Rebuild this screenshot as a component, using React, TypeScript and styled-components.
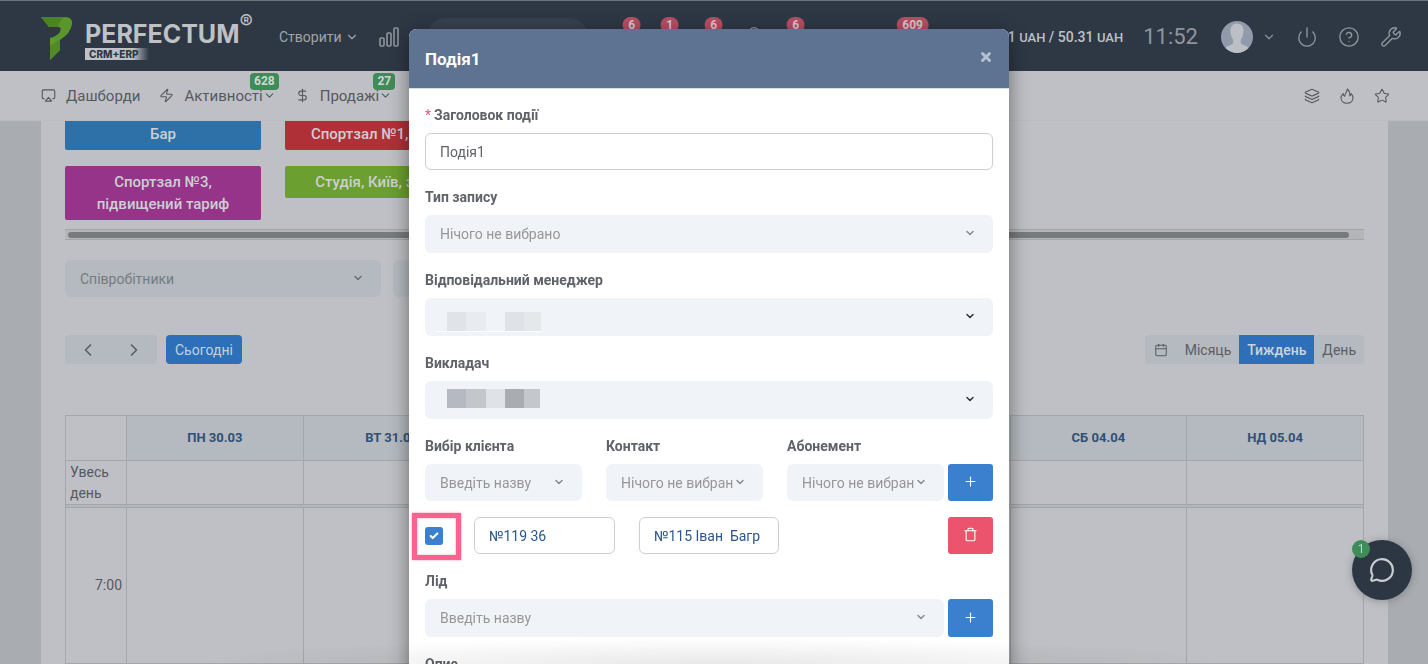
import React from 'react';
import styled, { createGlobalStyle } from 'styled-components';
import {
  Airplay, Zap, DollarSign, ChevronDown, ChevronLeft, ChevronRight, Power, Wrench, Layers,
  Star, Calendar, MessageCircle, Plus, X, Check, CircleQuestionMark, Bell, Trash,
} from 'lucide-react';

const Global = createGlobalStyle`
  *, *::before, *::after { box-sizing: border-box; }
  body {
    margin: 0;
    overflow: hidden;
    background: #a9adb2;
    color: #55595f;
    font: 14px/20px Roboto, "Liberation Sans", sans-serif;
  }
  button, input, select { font: inherit; color: inherit; margin: 0; }
  button { border: 0; padding: 0; background: none; cursor: pointer; }
  a { color: inherit; text-decoration: none; }
`;

const TopBars = styled.div`
  position: fixed;
  inset: 0 0 auto;
  z-index: 2;
`;

const Header = styled.header`
  display: flex;
  align-items: center;
  height: 71px;
  padding: 2px 26px 0 41px;
  border-top: 1px solid #6d737b;
  background: #2e3845;
  color: #8f959c;
`;

const Logo = styled.a`
  display: flex;
  align-items: center;
  width: 216px;
  padding-top: 3px;
  color: #bfc1c5;
`;
const LogoText = styled.span`
  display: flex;
  flex-direction: column;
  align-items: flex-start;
  margin-left: 12px;
  padding-top: 4px;
`;
const LogoName = styled.span`
  display: flex;
  font: 700 25px/27px Inter, sans-serif;
`;
const Registered = styled.sup`
  margin-top: -11px;
  font-weight: 400;
  font-size: 20px;
  line-height: 24px;
`;
const LogoTag = styled.span`
  width: 64px;
  padding-left: 4px;
  background: linear-gradient(90deg, #bfc1c5 75%, #2e3845);
  color: #2e3845;
  font: 800 10px/12px Inter, sans-serif;
`;

const CreateButton = styled.button`
  display: flex;
  align-items: center;
  gap: 3px;
  margin: 0 19px 0 22px;
  color: #a0a5ab;
`;

const SearchPill = styled.input`
  width: 161px;
  height: 38px;
  margin-left: 27px;
  border: 0;
  border-radius: 19px;
  background: #37414d;
`;

const Alerts = styled.div`
  display: flex;
  gap: 18px;
  margin-left: 32px;
`;
const Alert = styled.button<{ $gap?: number }>`
  position: relative;
  width: 24px;
  height: 22px;
  margin-left: ${(p) => p.$gap ?? 0}px;
`;
const AlertBadge = styled.span`
  position: absolute;
  left: 12px;
  top: -9px;
  transform: translateX(-50%);
  padding: 0 6px;
  border-radius: 8px;
  background: #b84e63;
  color: #d3c9ce;
  font-weight: 700;
  font-size: 12px;
  line-height: 16px;
`;

const HeaderEnd = styled.div`
  display: flex;
  align-items: center;
  margin-left: auto;
`;
const Balance = styled.span`
  margin-right: 20px;
  color: #bfc1c5;
  font-weight: 500;
  small { font-size: 13px; }
`;
const Clock = styled.time`
  margin-right: 23px;
  font-size: 22px;
`;
const Profile = styled.button`
  display: flex;
  align-items: center;
  gap: 9px;
`;
const IconLink = styled.button`
  display: flex;
  margin-left: 20px;
`;

const NavBar = styled.nav`
  display: flex;
  align-items: center;
  height: 50px;
  padding: 0 38px 0 41px;
  background: #bfc0c5;
  border-bottom: 1px solid #b9bcc0;
  font-size: 15px;
`;
const NavItem = styled.a`
  position: relative;
  display: flex;
  align-items: center;
  margin-right: 19px;
  svg:first-child { margin-right: 10px; }
`;
const NavBadge = styled.span`
  position: absolute;
  right: -3px;
  top: -13px;
  padding: 0 4px;
  border-radius: 4px;
  background: #3f8c58;
  color: #cfd6d3;
  font-weight: 700;
  font-size: 12px;
  line-height: 17px;
`;
const NavEnd = styled.div`
  display: flex;
  gap: 19px;
  margin-left: auto;
`;

const Panel = styled.main`
  min-height: 100vh;
  margin: 0 40px 0 41px;
  padding: 118px 24px 0;
  background: #bfc0c5;
`;

const Rooms = styled.div`
  display: grid;
  grid-template-columns: repeat(6, 196px);
  gap: 16px 24px;
  align-items: start;
  overflow: hidden;
`;
const Room = styled.button<{ $color: string }>`
  padding: 5px 12px;
  border-radius: 2px;
  background: ${(p) => p.$color};
  color: #ccced2;
  font-weight: 500;
  font-size: 15px;
  line-height: 22px;
`;

const Track = styled.div`
  height: 11px;
  margin: 9px 0 20px;
  padding: 2px 15px 2px 3px;
  border: 1px solid #a3a5a8;
  border-width: 1px 0;
  background: #b3b5b7;
`;
const Thumb = styled.div`
  height: 6px;
  border-radius: 3px;
  background: #787b7e;
`;

const Filters = styled.div`
  display: flex;
  gap: 12px;
  margin-bottom: 38px;
  & > * { width: 316px; }
`;

const SelectBox = styled.div<{ $dim?: boolean; $solid?: boolean; $h?: number }>`
  position: relative;
  display: flex;
  flex: ${(p) => (p.$dim ? 'none' : '1')};
  min-width: 0;
  & > select {
    appearance: none;
    width: 100%;
    height: ${(p) => p.$h ?? 38}px;
    padding: 0 29px 0 15px;
    border: 0;
    border-radius: 6px;
    background: ${(p) => (p.$dim ? '#b4babf' : '#f0f4f8')};
    color: ${(p) => (p.$dim ? '#777b7f' : '#969696')};
    text-overflow: clip;
  }
  & > svg.chevron {
    position: absolute;
    right: 17px;
    top: 12px;
    color: ${(p) => (p.$dim ? '#6b6f74' : p.$solid ? '#333' : '#888c90')};
    pointer-events: none;
  }
`;

const CalendarBar = styled.div`
  display: flex;
  align-items: center;
  height: 29px;
  margin-bottom: 51px;
`;
const ButtonGroup = styled.div`
  display: flex;
  height: 29px;
  border-radius: 4px;
  overflow: hidden;
  background: #b4babf;
  &:last-child { margin-left: auto; }
`;
const GroupButton = styled.button<{ $pad?: number; $active?: boolean }>`
  display: flex;
  align-items: center;
  padding: 0 ${(p) => p.$pad ?? 8}px;
  background: ${(p) => (p.$active ? '#2d6fb8' : 'none')};
  color: ${(p) => (p.$active ? '#cdd3da' : '#5b5f65')};
  font-weight: ${(p) => (p.$active ? 500 : 400)};
`;
const Today = styled.button`
  height: 29px;
  margin-left: 9px;
  padding: 0 9px;
  border-radius: 4px;
  background: #2d6fb8;
  color: #c5cfdb;
`;

const Week = styled.table`
  width: 100%;
  table-layout: fixed;
  border-collapse: collapse;
  th, td { border: 1px solid #a3a7ab; padding: 0 4px; }
  col:first-child { width: 61px; }
  thead th { height: 45px; }
  thead th[scope='col'] {
    background: #b4babf;
    color: #2f5078;
    font-weight: 700;
    font-size: 13px;
  }
  tbody th { font-weight: 400; text-align: left; line-height: 21px; }
  tr.allday > * { height: 44px; }
  tr.divider > * { height: 3px; background: #b4b7ba; }
  tr.hour > * { height: 156px; }
  tr.hour th { text-align: right; }
`;

const ChatButton = styled.button`
  position: fixed;
  right: 16px;
  bottom: 64px;
  display: flex;
  align-items: center;
  justify-content: center;
  width: 60px;
  height: 60px;
  border-radius: 50%;
  background: #2d3744;
  color: #c9ccd0;
  box-shadow: 0 1px 8px rgba(0, 0, 0, 0.25);
  span {
    position: absolute;
    left: 0;
    top: 0;
    width: 18px;
    height: 18px;
    border-radius: 50%;
    background: #3f8c58;
    font-size: 12px;
    line-height: 18px;
  }
`;

const Backdrop = styled.div`
  position: fixed;
  inset: 0;
  z-index: 3;
  display: flex;
  justify-content: center;
  align-items: flex-start;
  padding: 29px 10px 0 0;
  overflow: hidden;
`;
const Modal = styled.section`
  width: 600px;
  border-radius: 8px;
  background: #fff;
  box-shadow: 0 5px 20px rgba(0, 0, 0, 0.45);
`;
const ModalHeader = styled.header`
  display: flex;
  align-items: center;
  justify-content: space-between;
  height: 60px;
  padding: 0 16px;
  border-bottom: 1px solid #d5dde6;
  border-radius: 8px 8px 0 0;
  background: #5d7391;
  color: #fff;
  h1 { margin: 0; font-size: 17px; line-height: 24px; }
  button { display: flex; color: #b6c1cf; margin-bottom: 4px; }
`;
const Form = styled.form`
  display: flex;
  flex-direction: column;
  gap: 17px;
  padding: 16px 16px 40px;
`;
const Group = styled.div`
  display: flex;
  flex-direction: column;
  gap: 8px;
  min-width: 0;
`;
const Label = styled.label`
  color: #5f6369;
  font-weight: 700;
  em { color: #e0566f; font-style: normal; font-weight: 400; margin-right: 3px; }
`;
const TextInput = styled.input<{ $linked?: boolean }>`
  width: 100%;
  height: 37px;
  padding: 0 14px;
  border: 1px solid #ccced0;
  border-radius: 6px;
  background: #fff;
  color: ${(p) => (p.$linked ? '#2c568a' : '#5f6369')};
`;
const Line = styled.div`
  display: flex;
  align-items: flex-end;
  gap: 4px;
`;
const Columns = styled.div`
  display: grid;
  flex: 1;
  grid-template-columns: repeat(3, 1fr);
  gap: 24px;
`;
const ActionButton = styled.button<{ $danger?: boolean; $h?: number }>`
  display: flex;
  align-items: center;
  justify-content: center;
  width: 45px;
  height: ${(p) => p.$h ?? 37}px;
  margin-left: ${(p) => (p.$danger ? 'auto' : 0)};
  padding-bottom: 2px;
  border-radius: 3px;
  background: ${(p) => (p.$danger ? '#ec536c' : '#3a80cf')};
  color: #fff;
`;
const ClientRow = styled.div`
  display: grid;
  grid-template-columns: 25px 141px 140px 1fr;
  gap: 24px;
  align-items: center;
  margin-top: -1px;
`;
const Tick = styled.span`
  position: relative;
  display: flex;
  width: 18px;
  height: 18px;
  input {
    appearance: none;
    width: 18px;
    height: 18px;
    border-radius: 3px;
    background: #3a80cf;
  }
  & > svg {
    position: absolute;
    left: 4px;
    top: 4px;
    color: #fff;
    pointer-events: none;
  }
  &::after {
    content: '';
    position: absolute;
    inset: -14px -18px -15px -13px;
    border: 5px solid #f8648f;
    box-shadow: 0 0 2px rgba(248, 100, 143, 0.7), inset 0 0 2px rgba(248, 100, 143, 0.7);
    pointer-events: none;
  }
`;
const Mosaic = styled.svg`
  position: absolute;
  left: 10px;
  top: 8px;
  pointer-events: none;
`;
const BottomShade = styled.div`
  position: fixed;
  inset: auto 0 0;
  z-index: 4;
  height: 26px;
  background: radial-gradient(ellipse 520px 26px at 50% 100%, rgba(0, 0, 0, 0.09), transparent);
  pointer-events: none;
`;

function SelectField(props: {
  id: string; text: string; dim?: boolean; solid?: boolean; h?: number; label?: string; children?: React.ReactNode;
}) {
  return (
    <SelectBox $dim={props.dim} $solid={props.solid} $h={props.h}>
      <select id={props.id} aria-label={props.label}>
        <option>{props.text}</option>
      </select>
      {props.children}
      <ChevronDown className="chevron" size={12} strokeWidth={3} />
    </SelectBox>
  );
}

const days = ['ПН 30.03', 'ВТ 31.03', 'СР 01.04', 'ЧТ 02.04', 'ПТ 03.04', 'СБ 04.04', 'НД 05.04'];

const managerTiles: [number, number, string][] = [
  [12, 19, '#e0e4e8'], [31, 20, '#e8ecf0'], [70, 19, '#dfe2e6'], [89, 17, '#e4e8eb'],
];
const teacherTiles: [number, number, string][] = [
  [12, 19, '#b5b9c2'], [31, 20, '#c3c7ca'], [51, 19, '#dfe2e7'], [70, 19, '#a9adb0'], [89, 16, '#c4c7cb'],
];

export default function App() {
  return (
    <>
      <Global />
      <TopBars>
        <Header>
          <Logo href="#">
            <svg width="32" height="44" viewBox="41 17 32 44">
              <path d="M41 17H66Q73 18 72 24Q71 33 60 40H50V38Q57 36 60 32Q62 27 58 27H49Z" fill="#5b962c" />
              <path d="M45 22L41 17H66Q60 18 58 27H49Z" fill="#4a8424" />
              <path d="M50 38Q55 40 60 39V50L50 60Z" fill="#5f9a2e" />
              <path d="M50 46L60 39V50L50 60Z" fill="#4f8a27" />
            </svg>
            <LogoText>
              <LogoName>PERFECTUM<Registered>®</Registered></LogoName>
              <LogoTag>CRM+ERP</LogoTag>
            </LogoText>
          </Logo>
          <CreateButton>Створити <ChevronDown size={14} /></CreateButton>
          <svg width="22" height="20" viewBox="0 0 22 20" fill="none" stroke="currentColor" strokeWidth="1.600">
            <rect x="2" y="11" width="4" height="8" rx="1" />
            <rect x="9" y="6" width="4" height="13" rx="1" />
            <rect x="16" y="1" width="4" height="18" rx="1" />
          </svg>
          <SearchPill aria-label="Пошук" />
          <Alerts>
            <Alert><AlertBadge>6</AlertBadge></Alert>
            <Alert $gap={-4}><AlertBadge>1</AlertBadge></Alert>
            <Alert $gap={2}><AlertBadge>6</AlertBadge></Alert>
            <Alert $gap={-2}><Bell size={20} strokeWidth={1.5} /></Alert>
            <Alert><AlertBadge>6</AlertBadge></Alert>
            <Alert $gap={75}><AlertBadge>609</AlertBadge></Alert>
          </Alerts>
          <HeaderEnd>
            <Balance>31 <small>UAH</small> / 50.31 <small>UAH</small></Balance>
            <Clock>11:52</Clock>
            <Profile aria-label="Профіль">
              <svg width="32" height="32" viewBox="0 0 32 32">
                <circle cx="16" cy="16" r="16" fill="#8f9bab" />
                <path d="M16 2.500C11.500 2.500 9 6 9.500 11C9.800 14.500 11 17 12.200 18.500V22C11.500 24 7 24 4.500 27A16 16 0 0 0 27.500 27C25 24 20.500 24 19.800 22V18.500C21 17 22.200 14.500 22.500 11C23 6 20.500 2.500 16 2.500Z" fill="#bcc0c6" />
              </svg>
              <ChevronDown size={14} />
            </Profile>
            <IconLink aria-label="Вийти"><Power size={22} strokeWidth={1.5} /></IconLink>
            <IconLink aria-label="Допомога"><CircleQuestionMark size={22} strokeWidth={1.5} /></IconLink>
            <IconLink aria-label="Налаштування"><Wrench size={22} strokeWidth={1.5} /></IconLink>
          </HeaderEnd>
        </Header>
        <NavBar>
          <NavItem href="#"><Airplay size={15} strokeWidth={1.8} />Дашборди</NavItem>
          <NavItem href="#">
            <Zap size={15} strokeWidth={1.8} />Активності<ChevronDown size={13} />
            <NavBadge>628</NavBadge>
          </NavItem>
          <NavItem href="#">
            <DollarSign size={15} strokeWidth={1.8} />Продажі<ChevronDown size={13} />
            <NavBadge>27</NavBadge>
          </NavItem>
          <NavEnd>
            <Layers size={16} strokeWidth={1.8} />
            <svg width="16" height="16" viewBox="0 0 16 16" fill="none" stroke="currentColor" strokeWidth="1.100" strokeLinejoin="round">
              <path d="M8.300 1C8.600 3.500 5.800 5.200 5.700 8.300C4.700 7.800 4.300 6.800 4.200 5.600C2.700 7 2 8.500 2 10C2 13 4.500 15.200 8 15.200S14 13 14 10C14 8.200 13.300 6.800 12.200 5.600C12 6.600 11.600 7.300 10.800 7.800C11 5 10.300 2.600 8.300 1Z" />
            </svg>
            <Star size={16} strokeWidth={1.6} />
          </NavEnd>
        </NavBar>
      </TopBars>

      <Panel>
        <Rooms>
          <Room $color="#2d71a8">Бар</Room>
          <Room $color="#b03038">Спортзал №1, Київ 1</Room>
          <span /><span /><span /><span />
          <Room $color="#953488">Спортзал №3, підвищений тариф</Room>
          <Room $color="#6b9f2f">Студія, Київ, зал 12</Room>
        </Rooms>
        <Track><Thumb /></Track>
        <Filters>
          <SelectField id="staff" label="Співробітники" text="Співробітники" dim h={37} />
          <SelectField id="clients" label="Клієнти" text="Клієнти" dim h={37} />
        </Filters>
        <CalendarBar>
          <ButtonGroup>
            <GroupButton $pad={13} aria-label="Назад"><ChevronLeft size={20} /></GroupButton>
            <GroupButton $pad={13} aria-label="Вперед"><ChevronRight size={20} /></GroupButton>
          </ButtonGroup>
          <Today>Сьогодні</Today>
          <ButtonGroup>
            <GroupButton $pad={9} aria-label="Календар"><Calendar size={14} strokeWidth={1.8} /></GroupButton>
            <GroupButton>Місяць</GroupButton>
            <GroupButton $active>Тиждень</GroupButton>
            <GroupButton>День</GroupButton>
          </ButtonGroup>
        </CalendarBar>
        <Week>
          <colgroup><col />{days.map((d) => <col key={d} />)}</colgroup>
          <thead>
            <tr><th />{days.map((d) => <th scope="col" key={d}>{d}</th>)}</tr>
          </thead>
          <tbody>
            <tr className="allday"><th scope="row">Увесь день</th>{days.map((d) => <td key={d} />)}</tr>
            <tr className="divider"><td colSpan={8} /></tr>
            <tr className="hour"><th scope="row">7:00</th>{days.map((d) => <td key={d} />)}</tr>
          </tbody>
        </Week>
      </Panel>
      <ChatButton aria-label="Чат"><MessageCircle size={26} /><span>1</span></ChatButton>

      <Backdrop>
        <Modal role="dialog" aria-labelledby="modal-title">
          <ModalHeader>
            <h1 id="modal-title">Подія1</h1>
            <button aria-label="Закрити"><X size={14} strokeWidth={5} /></button>
          </ModalHeader>
          <Form>
            <Group>
              <Label htmlFor="title"><em>*</em>Заголовок події</Label>
              <TextInput id="title" defaultValue="Подія1" />
            </Group>
            <Group>
              <Label htmlFor="kind">Тип запису</Label>
              <SelectField id="kind" text="Нічого не вибрано" />
            </Group>
            <Group>
              <Label htmlFor="manager">Відповідальний менеджер</Label>
              <SelectField id="manager" text="" solid>
                <Mosaic width="108" height="28">
                  {managerTiles.map(([x, w, c]) => <rect key={x} x={x} y="6" width={w} height="19" fill={c} />)}
                  <rect x="0" y="25" width="106" height="1" fill="#fff" />
                </Mosaic>
              </SelectField>
            </Group>
            <Group>
              <Label htmlFor="teacher">Викладач</Label>
              <SelectField id="teacher" text="" solid>
                <Mosaic width="108" height="28">
                  {teacherTiles.map(([x, w, c]) => <rect key={x} x={x} y="0" width={w} height="19" fill={c} />)}
                </Mosaic>
              </SelectField>
            </Group>
            <Line>
              <Columns>
                <Group>
                  <Label htmlFor="client">Вибір клієнта</Label>
                  <SelectField id="client" text="Введіть назву" h={37} />
                </Group>
                <Group>
                  <Label htmlFor="contact">Контакт</Label>
                  <SelectField id="contact" text="Нічого не вибран" h={37} />
                </Group>
                <Group>
                  <Label htmlFor="pass">Абонемент</Label>
                  <SelectField id="pass" text="Нічого не вибран" h={37} />
                </Group>
              </Columns>
              <ActionButton type="button" aria-label="Додати клієнта"><Plus size={15} strokeWidth={1.8} /></ActionButton>
            </Line>
            <ClientRow>
              <Tick>
                <input type="checkbox" defaultChecked aria-label="Клієнт присутній" />
                <Check size={10} strokeWidth={5} />
              </Tick>
              <TextInput $linked aria-label="Клієнт" defaultValue="№119 36" />
              <TextInput $linked aria-label="Контактна особа" defaultValue="№115 Іван  Багр" />
              <ActionButton $danger type="button" aria-label="Видалити"><Trash size={15} strokeWidth={1.8} /></ActionButton>
            </ClientRow>
            <Group>
              <Label htmlFor="lead">Лід</Label>
              <Line>
                <SelectField id="lead" text="Введіть назву" />
                <ActionButton $h={38} type="button" aria-label="Додати лід"><Plus size={15} strokeWidth={1.8} /></ActionButton>
              </Line>
            </Group>
            <Group>
              <Label htmlFor="about">Опис</Label>
              <TextInput id="about" />
            </Group>
          </Form>
        </Modal>
      </Backdrop>
      <BottomShade />
    </>
  );
}
